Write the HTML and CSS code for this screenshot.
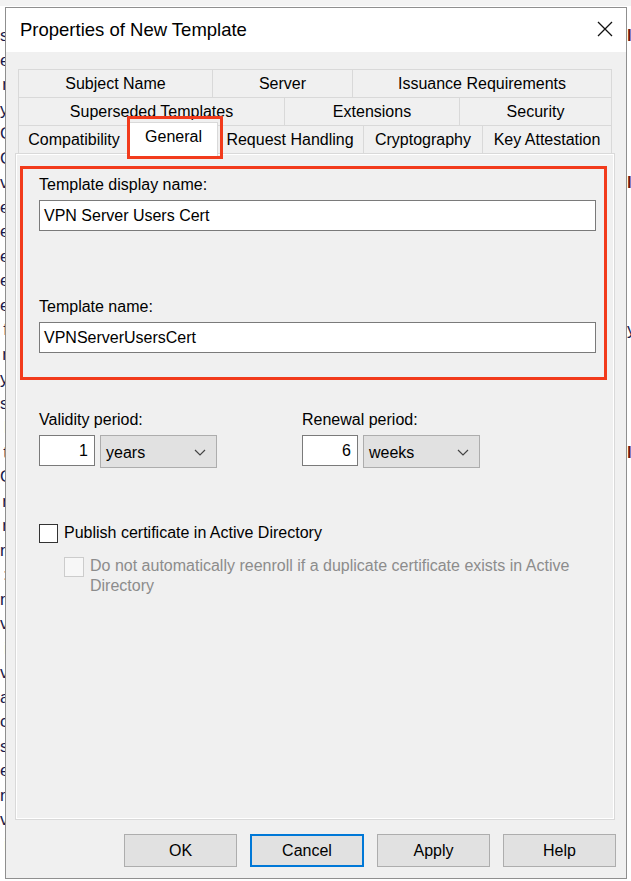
FILE: index.html
```html
<!DOCTYPE html>
<html lang="en">
<head>
    <meta charset="UTF-8">
    <title>Properties of New Template</title>
    <link rel="stylesheet" href="styles.css">
</head>
<body>
<div class="desktop">
    <!-- Window behind the dialog, only its edges show -->
    <div class="behind">
        <div class="behind-col behind-left">
            <span>s</span><span>e</span><span>r</span><span>y</span><span>C</span><span>C</span>
            <span>v</span><span>e</span><span>e</span><span>e</span><span>e</span><span>e</span>
            <span>f</span><span>r</span><span>y</span><span>s</span><span>l</span><span>t</span>
            <span>O</span><span>r</span><span>r</span><span>n</span><span>:</span><span>n</span>
            <span>v</span><span>i</span><span>v</span><span>a</span><span>c</span><span>s</span>
            <span>e</span><span>n</span><span>v</span><span>i</span>
        </div>
        <div class="behind-col behind-right">
            <span class="mark">l</span><span></span><span></span><span></span><span></span><span></span>
            <span class="mark">l</span><span></span><span></span><span></span><span></span><span></span>
            <span>y</span><span></span><span></span><span></span><span></span><span class="mark">l</span>
        </div>
    </div>

    <div class="dialog">
        <div class="titlebar">
            <span class="title">Properties of New Template</span>
            <svg class="close-icon" viewBox="0 0 16 16">
                <path d="M1 1L15 15M15 1L1 15"></path>
            </svg>
        </div>

        <div class="dialog-body">
            <div class="tabs">
                <div class="tab-row row-one">
                    <div class="tab">Subject Name</div>
                    <div class="tab">Server</div>
                    <div class="tab">Issuance Requirements</div>
                </div>
                <div class="tab-row row-two">
                    <div class="tab">Superseded Templates</div>
                    <div class="tab">Extensions</div>
                    <div class="tab">Security</div>
                </div>
                <div class="tab-row row-three">
                    <div class="tab">Compatibility</div>
                    <div class="tab tab-selected">General</div>
                    <div class="tab">Request Handling</div>
                    <div class="tab">Cryptography</div>
                    <div class="tab">Key Attestation</div>
                </div>
            </div>

            <div class="tab-panel">
                <div class="highlight-box">
                    <div class="field-label">Template display name:</div>
                    <div class="text-input">VPN Server Users Cert</div>
                    <div class="field-label label-second">Template name:</div>
                    <div class="text-input">VPNServerUsersCert</div>
                </div>

                <div class="periods">
                    <div class="period">
                        <div class="field-label">Validity period:</div>
                        <div class="period-controls">
                            <div class="num-input">1</div>
                            <div class="select">
                                <span>years</span>
                                <svg class="chevron" viewBox="0 0 12 7"><path d="M1 1L6 6L11 1"></path></svg>
                            </div>
                        </div>
                    </div>
                    <div class="period">
                        <div class="field-label">Renewal period:</div>
                        <div class="period-controls">
                            <div class="num-input">6</div>
                            <div class="select">
                                <span>weeks</span>
                                <svg class="chevron" viewBox="0 0 12 7"><path d="M1 1L6 6L11 1"></path></svg>
                            </div>
                        </div>
                    </div>
                </div>

                <div class="check-row">
                    <span class="checkbox"></span>
                    <span class="check-text">Publish certificate in Active Directory</span>
                </div>
                <div class="check-row check-sub">
                    <span class="checkbox checkbox-disabled"></span>
                    <span class="check-text text-disabled">Do not automatically reenroll if a duplicate certificate exists in Active Directory</span>
                </div>
            </div>

            <div class="buttons">
                <div class="button">OK</div>
                <div class="button button-default">Cancel</div>
                <div class="button">Apply</div>
                <div class="button">Help</div>
            </div>
        </div>
    </div>
</div>
</body>
</html>
```

FILE: styles.css
```css
* {
    box-sizing: border-box;
    margin: 0;
    padding: 0;
}

body {
    font-family: "Liberation Sans", Arial, sans-serif;
    font-size: 16px;
    color: #000;
    background-color: #f3f3f3;
}

.desktop {
    position: relative;
    width: 631px;
    height: 881px;
    overflow: hidden;
}

/* Window behind */
.behind {
    display: flex;
    justify-content: space-between;
    height: 881px;
    padding-top: 24px;
    background: linear-gradient(#f3f3f3 0, #f3f3f3 6px, #fff 6px);
}

.behind-col {
    display: flex;
    flex-direction: column;
    width: 8px;
    overflow: hidden;
    font-size: 17px;
    line-height: 24.5px;
    color: #1a1a4a;
}

.behind-left {
    text-align: right;
}

.behind-right {
    text-align: left;
    padding-left: 2px;
    width: 6px;
}

.behind-col span {
    flex: 0 0 24.5px;
    height: 24.5px;
}

.mark {
    color: #6b1a1a;
    font-weight: bold;
}

/* Dialog */
.dialog {
    position: absolute;
    left: 5px;
    top: 7px;
    width: 622px;
    height: 872px;
    border: 1px solid #8f8f8f;
    background-color: #f0f0f0;
    display: flex;
    flex-direction: column;
}

.titlebar {
    height: 44px;
    background-color: #fff;
    display: flex;
    align-items: center;
    justify-content: space-between;
    padding: 0 13px 0 14px;
}

.title {
    font-size: 18.5px;
    margin-top: -1px;
}

.close-icon {
    width: 16px;
    height: 16px;
    stroke: #111;
    stroke-width: 1.3;
    fill: none;
    margin-top: -2px;
}

.dialog-body {
    padding: 17px 11px 0 9px;
}

/* Tabs */
.tabs {
    margin: 0 3px;
}

.tab-row {
    display: grid;
    height: 29px;
}

.tab-row + .tab-row {
    margin-top: -1px;
}

.row-one {
    grid-template-columns: 195px 140px 1fr;
}

.row-two {
    grid-template-columns: 267px 175px 1fr;
}

.row-three {
    grid-template-columns: 112px 87px 147px 119px 1fr;
}

.tab {
    display: flex;
    align-items: center;
    justify-content: center;
    border: 1px solid #d9d9d9;
    background-color: #f0f0f0;
    white-space: nowrap;
    padding-top: 1px;
}

.tab + .tab {
    margin-left: -1px;
}

.tab-selected {
    position: relative;
    z-index: 2;
    background-color: #fff;
    margin-top: -3px;
    margin-bottom: -2px;
    margin-left: -1px;
    margin-right: -1px;
    border-bottom: none;
    padding-top: 0;
    padding-bottom: 6px;
}

.tab-selected::after {
    content: "";
    position: absolute;
    top: -7px;
    left: -3px;
    right: -6px;
    bottom: -3px;
    border: 3px solid #f23b1c;
}

/* Panel */
.tab-panel {
    position: relative;
    z-index: 1;
    height: 667px;
    margin-top: -1px;
    border: 1px solid #d9d9d9;
    box-shadow: inset 0 0 0 1px #fff;
    background-color: #f0f0f0;
    padding: 12px 7px 0 4px;
}

.highlight-box {
    border: 3px solid #f23b1c;
    padding: 6px 8px 24px 16px;
}

.field-label {
    line-height: 19px;
    height: 19px;
    margin-bottom: 6px;
}

.label-second {
    margin-top: 66px;
}

.text-input {
    height: 31px;
    border: 1px solid #7a7a7a;
    background-color: #fff;
    padding: 0 4px;
    display: flex;
    align-items: center;
}

.periods {
    display: grid;
    grid-template-columns: 263px 1fr;
    margin-top: 30px;
    padding-left: 19px;
}

.period-controls {
    display: flex;
    gap: 5px;
}

.num-input {
    width: 56px;
    height: 31px;
    border: 1px solid #7a7a7a;
    background-color: #fff;
    display: flex;
    align-items: center;
    justify-content: flex-end;
    padding-right: 6px;
}

.select {
    width: 117px;
    height: 33px;
    border: 1px solid #adadad;
    background-color: #e1e1e1;
    display: flex;
    align-items: center;
    justify-content: space-between;
    padding: 2px 10px 0 5px;
}

.chevron {
    width: 12px;
    height: 7px;
    stroke: #444;
    stroke-width: 1.2;
    fill: none;
}

/* Checkboxes */
.check-row {
    display: flex;
    align-items: flex-start;
    gap: 6px;
    padding-left: 19px;
    margin-top: 55px;
}

.checkbox {
    flex: 0 0 19px;
    width: 19px;
    height: 19px;
    border: 1.5px solid #333;
    background-color: #fff;
    margin-top: 1px;
}

.check-text {
    line-height: 20px;
}

.check-sub {
    margin-top: 13px;
    padding-left: 44px;
}

.checkbox-disabled {
    flex: 0 0 20px;
    width: 20px;
    height: 20px;
    border: 1px solid #cccccc;
    background-color: #f7f7f7;
}

.text-disabled {
    color: #8c8c8c;
    max-width: 512px;
}

/* Buttons */
.buttons {
    display: flex;
    justify-content: flex-end;
    gap: 13px;
    margin-top: 14px;
    margin-right: -1px;
}

.button {
    width: 113px;
    height: 33px;
    border: 1px solid #adadad;
    background-color: #e1e1e1;
    display: flex;
    align-items: center;
    justify-content: center;
    padding-top: 1px;
}

.button-default {
    width: 114px;
    border: 2px solid #0078d7;
}
```
